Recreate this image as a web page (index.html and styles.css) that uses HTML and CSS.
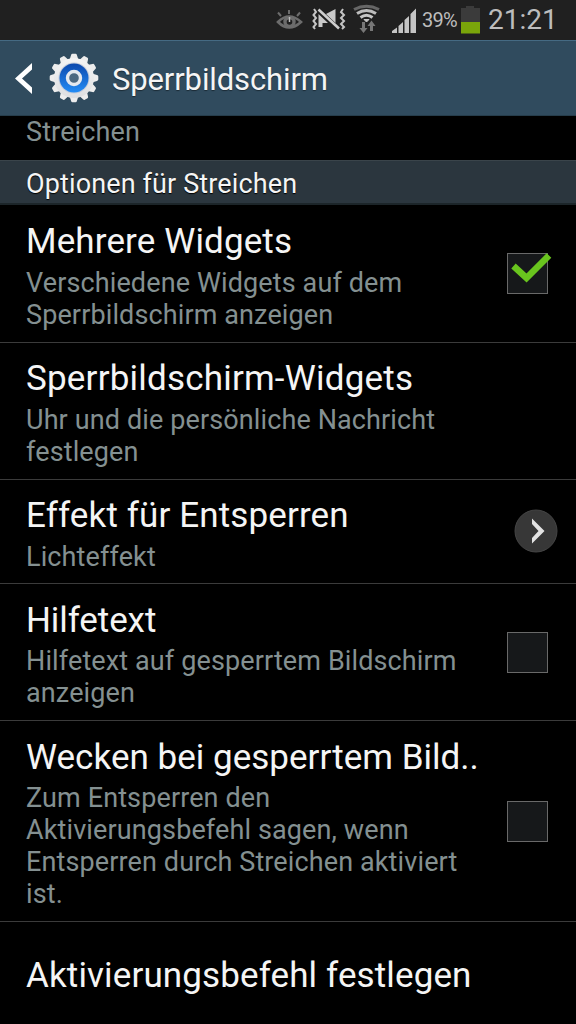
FILE: index.html
```html
<!DOCTYPE html>
<html lang="de">
<head>
<meta charset="utf-8">
<title>Sperrbildschirm</title>
<link rel="stylesheet" href="styles.css">
</head>
<body>
<div class="screen">
  <header class="status">
    <svg class="status-icons" width="146" height="40" viewBox="0 0 146 40">
      <g fill="none" stroke="#6c6c6c" stroke-width="2">
        <path d="M8 22Q19 11 31 22Q19 33 8 22Z" stroke-width="2.600"/>
        <path d="M19 14V10M11 16L8 12.500M27 16L30 12.500"/>
        <circle cx="19.500" cy="22" r="4.500" stroke-width="3.400"/>
        <path d="M19.500 22V17" stroke="#bbb" stroke-width="1.500"/>
      </g>
      <g>
        <path d="M48.500 14L58 23H52.500V27H48.500ZM56 14L65.500 9V23Z" fill="#c9c9c9"/>
        <path d="M48.500 9.500L69 28.500" stroke="#cfcfcf" stroke-width="2.600"/>
        <path d="M44 9L46 12L43.500 15L46 18L43.500 21L46 24L43.500 27L45 29M73 9L71 12L74 15L71 18L74 21L71 24L74 27L72 29" fill="none" stroke="#c4c4c4" stroke-width="2"/>
      </g>
      <g fill="none" stroke="#c6c6c6" stroke-width="3">
        <path d="M84 9.500Q96.500 3 109 9.500" stroke="#666"/>
        <path d="M87 13.500Q96.500 7.500 106 13.500" stroke="#bcbcbc"/>
        <path d="M90.500 17.500Q96.500 13 102.500 17.500"/>
        <path d="M94 19.500L96.500 22L99 19.500Z" fill="#c6c6c6" stroke-width="1"/>
      </g>
      <path d="M92 22H95V28H97.500L93.500 33L89.500 28H92ZM100 31H103V26H105.500L101.500 20.500L97.500 26H100Z" fill="#777"/>
      <path d="M122 33V31L127 27.500V33ZM128.500 33V26L133 22V33ZM134.500 33V20L139 16V33ZM140.500 33V14L146.500 8V33Z" fill="#c5c5c5"/>
    </svg>
    <span class="percent">39%</span>
    <svg class="battery" width="20" height="40" viewBox="0 0 20 40">
      <path d="M1 8H6V6H14V8H20V22H1Z" fill="#3b3b3b"/>
      <path d="M1 22H20V33.500H1Z" fill="#7aa50a"/>
    </svg>
    <span class="clock">21:21</span>
  </header>

  <div class="appbar">
    <svg class="back" width="20" height="40" viewBox="0 0 20 40">
      <path d="M18 5V11.500L8 20.500L18 29.500V36L1 20.500Z" fill="#fff"/>
    </svg>
    <svg class="gear" width="50" height="50" viewBox="-25 -25 50 50">
      <defs>
        <linearGradient id="metal" x1="0" y1="0" x2="0" y2="1">
          <stop offset="0" stop-color="#f4f4f4"/><stop offset="1" stop-color="#dedfe1"/>
        </linearGradient>
        <linearGradient id="blue" x1="0" y1="0" x2="0" y2="1">
          <stop offset="0" stop-color="#0b48ad"/><stop offset="1" stop-color="#248cf5"/>
        </linearGradient>
        <path id="tooth" d="M-4.500 -18L-2.900 -23Q-2.600 -24.300 -1.600 -24.300H1.600Q2.600 -24.300 2.900 -23L4.500 -18Z"/>
      </defs>
      <g fill="#ededed">
        <use href="#tooth"/><use href="#tooth" transform="rotate(30)"/><use href="#tooth" transform="rotate(60)"/>
        <use href="#tooth" transform="rotate(90)"/><use href="#tooth" transform="rotate(120)"/><use href="#tooth" transform="rotate(150)"/>
        <use href="#tooth" transform="rotate(180)"/><use href="#tooth" transform="rotate(210)"/><use href="#tooth" transform="rotate(240)"/>
        <use href="#tooth" transform="rotate(270)"/><use href="#tooth" transform="rotate(300)"/><use href="#tooth" transform="rotate(330)"/>
      </g>
      <circle r="20" fill="url(#metal)"/>
      <circle r="15.500" fill="#c5cddb"/>
      <circle r="14.500" fill="url(#blue)"/>
      <circle r="6.500" fill="#4c6880" stroke="#e4e8ee" stroke-width="3.400"/>
    </svg>
    <h1 class="heading">Sperrbildschirm</h1>
  </div>

  <div class="previous">Streichen</div>
  <h2 class="section">Optionen für Streichen</h2>

  <main class="list">
    <div class="row row-first">
      <div class="text">
        <div class="title">Mehrere Widgets</div>
        <div class="summary">Verschiedene Widgets auf dem<br>Sperrbildschirm anzeigen</div>
      </div>
      <span class="check">
        <svg class="tick" width="44" height="32" viewBox="0 0 44 32">
          <path d="M4.500 13L17.500 25L40 2.500" fill="none" stroke="#69c41e" stroke-width="6.500"/>
        </svg>
      </span>
    </div>
    <div class="row">
      <div class="text">
        <div class="title title-wide">Sperrbildschirm-Widgets</div>
        <div class="summary">Uhr und die persönliche Nachricht<br>festlegen</div>
      </div>
    </div>
    <div class="row row-single">
      <div class="text">
        <div class="title">Effekt für Entsperren</div>
        <div class="summary">Lichteffekt</div>
      </div>
      <svg class="more" width="44" height="44" viewBox="0 0 44 44">
        <circle cx="22" cy="22" r="21" fill="#373737" stroke="#454545" stroke-width="1"/>
        <path d="M18 9.500L30.500 22L18 34.500V29L24.500 22L18 15Z" fill="#e2e2e2"/>
      </svg>
    </div>
    <div class="row row-lower">
      <div class="text">
        <div class="title title-narrow">Hilfetext</div>
        <div class="summary">Hilfetext auf gesperrtem Bildschirm<br>anzeigen</div>
      </div>
      <span class="check"></span>
    </div>
    <div class="row row-lower row-tall">
      <div class="text">
        <div class="title title-plain">Wecken bei gesperrtem Bild..</div>
        <div class="summary">Zum Entsperren den<br>Aktivierungsbefehl sagen, wenn<br>Entsperren durch Streichen aktiviert<br>ist.</div>
      </div>
      <span class="check"></span>
    </div>
    <div class="row row-last">
      <div class="title">Aktivierungsbefehl festlegen</div>
    </div>
  </main>
</div>
</body>
</html>
```
FILE: styles.css
```css
* { box-sizing: border-box; }
body { margin: 0; background: #000; }
.screen {
  width: 576px;
  height: 1024px;
  overflow: hidden;
  display: flex;
  flex-direction: column;
  background: #000;
  color: #f5f5f5;
  font-family: Roboto, "Noto Sans", sans-serif;
  white-space: nowrap;
}
.status {
  flex: none;
  height: 40px;
  display: flex;
  padding-left: 270px;
  background: #202020;
  color: #bdbdbd;
}
.status svg { flex: none; }
.percent { width: 38px; padding-left: 6px; font-size: 20px; line-height: 41px; letter-spacing: -0.8px; }
.battery { margin-left: 6px; }
.clock { margin-left: 8px; font-size: 28px; line-height: 39px; }
.appbar {
  flex: none;
  height: 76px;
  display: flex;
  align-items: center;
  padding-left: 14px;
  background: #304b5e;
  border-top: 1px solid #456a83;
  border-bottom: 1px solid #263d4b;
}
.gear { margin-left: 15px; }
.heading {
  margin: 3px 0 0 13px;
  font-size: 31px;
  font-weight: 400;
  line-height: 40px;
  letter-spacing: -0.13px;
  text-shadow: 0 1px 1px #1b2b36;
}
.previous {
  flex: none;
  height: 44px;
  padding-left: 26px;
  color: #849091;
  font-size: 27px;
  line-height: 33px;
  letter-spacing: 0.13px;
}
.section {
  flex: none;
  height: 45px;
  margin: 0;
  padding-left: 26px;
  background: #2b363e;
  border-top: 1px solid #3a444a;
  border-bottom: 2px solid #1c2529;
  font-size: 27px;
  font-weight: 400;
  line-height: 46px;
  letter-spacing: 0.13px;
  text-shadow: 0 1px 1px #000;
}
.row {
  display: flex;
  align-items: center;
  justify-content: space-between;
  height: 137px;
  padding: 4px 28px 0 26px;
  border-bottom: 1px solid #3b3b3b;
}
.row-first { height: 138px; }
.row-single { height: 104px; padding-right: 18px; }
.row-lower { padding-top: 5px; }
.row-lower .summary { margin-top: -1px; }
.row-tall { height: 201px; }
.row-last { height: 108px; border: 0; }
.title { margin-bottom: 5px; font-size: 35px; line-height: 41px; letter-spacing: 0.12px; }
.title-wide { letter-spacing: 0.2px; }
.title-narrow { letter-spacing: -0.1px; }
.title-plain { letter-spacing: 0.02px; }
.summary { color: #849091; font-size: 27px; line-height: 32px; letter-spacing: 0.12px; }
.check {
  position: relative;
  flex: none;
  width: 41px;
  height: 41px;
  margin-top: -4px;
  background: #16181a;
  border: 1px solid #696969;
}
.row-lower .check { margin-top: -5px; }
.more { flex: none; margin-top: -6px; }
.tick { position: absolute; left: 1px; top: -1px; }
```
